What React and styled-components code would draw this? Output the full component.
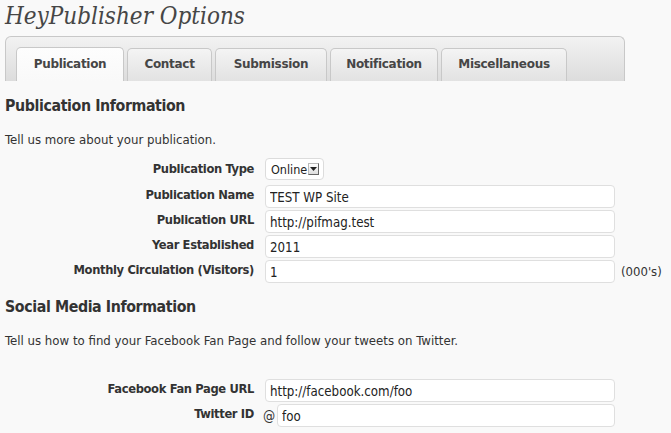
import React from "react";
import styled, { createGlobalStyle } from "styled-components";

const Global = createGlobalStyle`
  html, body { margin: 0; padding: 0; background: #f9f9f9; }
  body { font-family: "DejaVu Sans Condensed", "DejaVu Sans", sans-serif; color: #333; }
`;

const Page = styled.div`
  width: 671px;
  height: 433px;
  overflow: hidden;
  padding: 0 0 0 5px;
  box-sizing: border-box;
`;

const Title = styled.h2`
  margin: 0;
  padding: 2px 0 0 0;
  height: 33px;
  box-sizing: border-box;
  font-family: "DejaVu Serif Condensed", "DejaVu Serif", Georgia, serif;
  font-style: italic;
  font-weight: normal;
  font-size: 24px;
  line-height: 29px;
  color: #464646;
`;

const TabBar = styled.div`
  width: 620px;
  height: 45px;
  box-sizing: border-box;
  margin-top: 3px;
  border: 1px solid #c8c8c8;
  border-bottom: none;
  border-radius: 6px 6px 0 0;
  background: linear-gradient(#f2f2f2, #dcdcdc);
  display: flex;
  align-items: flex-end;
  gap: 3px;
  padding-left: 10px;
`;

const Tab = styled.div`
  height: ${(p) => (p.$active ? 34 : 33)}px;
  box-sizing: border-box;
  width: ${(p) => p.$w}px;
  border: 1px solid #c8c8c8;
  border-bottom: none;
  border-radius: 5px 5px 0 0;
  background: ${(p) =>
    p.$active ? "linear-gradient(#fdfdfd, #f9f9f9)" : "linear-gradient(#f4f4f4, #e2e2e2)"};
  font-family: "DejaVu Sans", sans-serif;
  font-weight: bold;
  font-size: 12px;
  color: #464646;
  display: flex;
  justify-content: center;
  align-items: center;
  padding-bottom: ${(p) => (p.$active ? 1 : 2)}px;
  letter-spacing: -0.3px;
`;

const Heading = styled.h3`
  margin: 0;
  font-size: 15.8px;
  font-weight: bold;
  line-height: 20px;
  letter-spacing: -0.4px;
  color: #333;
  padding-top: ${(p) => p.$top}px;
`;

const Para = styled.p`
  margin: 0;
  font-size: 13.1px;
  line-height: 16px;
  padding-top: ${(p) => p.$top}px;
`;

const Form = styled.div`
  display: flex;
  flex-direction: column;
  padding-top: ${(p) => p.$top}px;
`;

const Row = styled.div`
  display: grid;
  grid-template-columns: 249px 350px auto;
  column-gap: 11px;
  align-items: start;
  height: ${(p) => p.$h || 25}px;
`;

const Label = styled.label`
  text-align: right;
  font-weight: bold;
  font-size: 12.8px;
  letter-spacing: -0.35px;
  line-height: 16px;
  padding-top: ${(p) => p.$pt ?? 2}px;
  white-space: nowrap;
`;

const Cell = styled.div`
  display: flex;
  align-items: center;
  gap: 4px;
`;

const Input = styled.input`
  box-sizing: border-box;
  height: 23px;
  width: 100%;
  border: 1px solid #dfdfdf;
  border-radius: 4px;
  background: #fff;
  padding: 1px 4px 0;
  font-family: "DejaVu Sans Condensed", "DejaVu Sans", sans-serif;
  font-size: 13.2px;
  color: #222;
  outline: none;
`;

const Select = styled.div`
  box-sizing: border-box;
  height: 22px;
  width: 59px;
  margin-top: -2px;
  border: 1px solid #dcdcdc;
  border-radius: 4px;
  background: #fff;
  display: flex;
  align-items: center;
  padding-left: 5px;
  font-size: 12.5px;
  gap: 1px;
  color: #222;
`;

const Arrow = styled.span`
  width: 11px;
  height: 12px;
  box-sizing: border-box;
  border: 1px solid #bbb;
  border-right-color: #666;
  border-bottom-color: #666;
  background: linear-gradient(#fff, #ddd);
  display: flex;
  align-items: center;
  justify-content: center;
`;

const Suffix = styled.span`
  font-size: 13px;
  line-height: 23px;
  margin-left: -5px;
`;

const At = styled.span`
  font-size: 13.5px;
  line-height: 16px;
  width: 10px;
  margin-left: -2px;
`;

const tabs = [
  ["Publication", 108, true],
  ["Contact", 85],
  ["Submission", 112],
  ["Notification", 108],
  ["Miscellaneous", 126],
];

export default function App() {
  return (
    <>
      <Global />
      <Page>
        <Title>HeyPublisher Options</Title>
        <TabBar>
          {tabs.map(([t, w, a]) => (
            <Tab key={t} $w={w} $active={a}>
              {t}
            </Tab>
          ))}
        </TabBar>
        <Heading $top={15}>Publication Information</Heading>
        <Para $top={16}>Tell us more about your publication.</Para>
        <Form $top={12}>
          <Row $h={25}>
            <Label $pt={1}>Publication Type</Label>
            <Cell>
              <Select>
                Online
                <Arrow>
                  <svg width="7" height="4" viewBox="0 0 7 4">
                    <path d="M0 0h7L3.5 4z" fill="#222" />
                  </svg>
                </Arrow>
              </Select>
            </Cell>
          </Row>
          <Row>
            <Label>Publication Name</Label>
            <Cell><Input defaultValue="TEST WP Site" /></Cell>
          </Row>
          <Row>
            <Label>Publication URL</Label>
            <Cell><Input defaultValue="http://pifmag.test" /></Cell>
          </Row>
          <Row>
            <Label>Year Established</Label>
            <Cell><Input defaultValue="2011" /></Cell>
          </Row>
          <Row>
            <Label>Monthly Circulation (Visitors)</Label>
            <Cell><Input defaultValue="1" /></Cell>
            <Suffix>(000's)</Suffix>
          </Row>
        </Form>
        <Heading $top={12}>Social Media Information</Heading>
        <Para $top={16}>Tell us how to find your Facebook Fan Page and follow your tweets on Twitter.</Para>
        <Form $top={30}>
          <Row>
            <Label>Facebook Fan Page URL</Label>
            <Cell><Input defaultValue="http://facebook.com/foo" /></Cell>
          </Row>
          <Row>
            <Label>Twitter ID</Label>
            <Cell>
              <At>@</At>
              <Input defaultValue="foo" />
            </Cell>
          </Row>
        </Form>
      </Page>
    </>
  );
}
